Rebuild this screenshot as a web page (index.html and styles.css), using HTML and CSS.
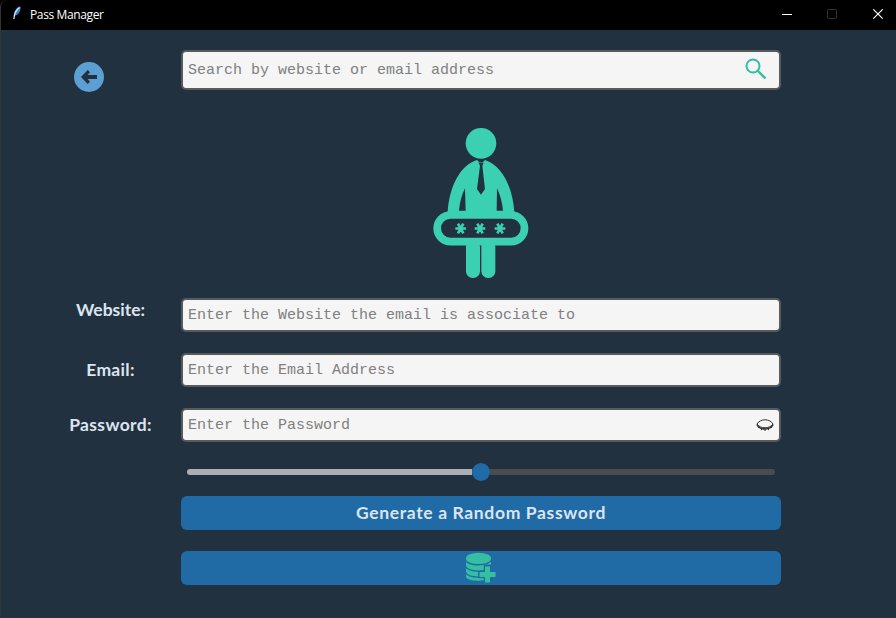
FILE: index.html
```html
<!DOCTYPE html>
<html lang="en">
<head>
<meta charset="utf-8">
<title>Pass Manager</title>
<link rel="stylesheet" href="styles.css">
</head>
<body>
<div class="window">
  <header class="titlebar">
    <svg class="feather" width="9" height="14" viewBox="0 0 9 14"><path d="M1 11C.5 6 3 1 7.500.6 8 4 6 9 2.500 9.500" fill="#3e83cd"/><path d="M1 13C1 8 3 4 6.500 1.500" fill="none" stroke="#d6eaff" stroke-width="1.300"/></svg>
    <span class="title">Pass Manager</span>
    <svg class="controls" width="102" height="12" viewBox="0 0 102 12" fill="none"><path d="M0 5.500H10" stroke="#fff"/><rect x="45.500" y=".5" width="9" height="9" rx="1" stroke="#333"/><path d="M91.300.3l9.400 9.400M100.700.3l-9.400 9.400" stroke="#fff" stroke-width="1.100"/></svg>
  </header>
  <main class="form">
    <button class="back" aria-label="Back"><svg width="30" height="30" viewBox="0 0 30 30"><circle cx="15" cy="15" r="15" fill="#5b9fd3"/><path d="M7 15l6.700-7 2.300 2.300-2.400 2.700H23v4h-9.400l2.400 2.700-2.300 2.300z" fill="#22313f"/></svg></button>
    <div class="field search"><span class="hint">Search by website or email address</span><svg width="22" height="22" viewBox="0 0 22 22" fill="none" stroke="#30bfa3"><circle cx="8" cy="8" r="6.500" stroke-width="2"/><path d="M12.500 12.500l8 8" stroke-width="2.400"/></svg></div>

    <svg class="figure" width="112" height="165" viewBox="0 0 336 495">
      <g fill="#3bd0b2">
        <circle cx="168" cy="70" r="46"/>
        <path d="M68 276C73 200 105 136 156 120Q162 128 168 128Q174 128 180 120C230 136 263 200 268 276Z"/>
        <rect x="123" y="360" width="42" height="114" rx="20"/>
        <rect x="169" y="360" width="42" height="114" rx="20"/>
      </g>
      <path fill="#22313f" d="M160 127Q168 132 176 127L172 137L180 207L168 224L156 207L165 137ZM120 205C110 225 104 248 102 272H122ZM216 205C226 225 232 248 234 272H215Z"/>
      <rect x="36.500" y="285" width="262" height="80" rx="40" fill="#22313f" stroke="#3bd0b2" stroke-width="23"/>
      <path d="M91 325.500h32M99 311l16 29M115 311l-16 29M149 325.500h32M157 311l16 29M173 311l-16 29M209 325.500h32M217 311l16 29M233 311l-16 29" fill="none" stroke="#3bd0b2" stroke-width="8"/>
    </svg>

    <span class="label website">Website:</span>
    <div class="field"><span class="hint">Enter the Website the email is associate to</span></div>
    <span class="label email">Email:</span>
    <div class="field"><span class="hint">Enter the Email Address</span></div>
    <span class="label password">Password:</span>
    <div class="field"><span class="hint">Enter the Password</span><svg class="eye" width="18" height="12" viewBox="0 0 18 12" fill="none" stroke="#303030"><path d="M1 5C4-.6 14-.6 17 5C14 10 4 10 1 5Z"/><path d="M.8 5.500C4 11.500 14 11.500 17.200 5.500" stroke-width="1.500"/><path d="M3 8l-1 1M6 9l-.6 2.200M9 10v2M12 9l.6 2.200M15 8l1 1"/></svg></div>

    <div class="slider"><span class="filled"></span><span class="thumb"></span><span class="rest"></span></div>
    <button class="action">Generate a Random Password</button>
    <button class="action save" aria-label="Save"><svg width="31" height="31" viewBox="0 0 31 31"><path d="M1 6v18.500c0 2.500 5 4.200 12.500 4.200S26 26.500 26 24.500V6z" fill="#35bea0"/><path d="M0 7.500c3 7 23 7 27 0M0 13.500c3 7.500 23 7.500 27 0M0 19.500c3 7.500 23 7.500 27 0" fill="none" stroke="#206ba6" stroke-width="1.400"/><ellipse cx="13.500" cy="6" rx="12.500" ry="5.300" fill="#35bea0"/><path d="M22.500 12.500v18.500M13 22.500h18" stroke="#206ba6" stroke-width="7.500"/><path d="M22.500 14.500v16M14.500 22.500h16" stroke="#35bea0" stroke-width="5"/></svg></button>
  </main>
</div>
</body>
</html>
```

FILE: styles.css
```css
* { box-sizing: border-box; }
body { margin: 0; background: #000; }
button { border: 0; padding: 0; font: inherit; }
svg { display: block; flex: none; }
.window {
  height: 618px;
  border-left: 1px solid #343434;
  border-top-left-radius: 7px;
  background: #22313f;
  overflow: hidden;
}
.titlebar {
  display: flex;
  height: 30px;
  padding: 0 12px;
  background: #000;
  color: #fff;
}
.feather { margin-top: 6px; }
.title {
  margin-left: 8px;
  font: 12px/30px "Open Sans", sans-serif;
  letter-spacing: -.38px;
}
.controls { margin: 9px 0 0 auto; }
.form {
  display: grid;
  grid-template-columns: 140px 600px;
  grid-template-rows: 40px 166px 34px 34px 34px 18px 34px 34px;
  row-gap: 21px;
  padding: 20px 0 0 40px;
}
.back {
  width: 30px;
  height: 30px;
  margin: 12px 0 0 33px;
  background: transparent;
}
.field {
  display: flex;
  align-items: center;
  justify-content: space-between;
  border: 2px solid #565b5e;
  border-radius: 5px;
  background: #f5f5f5;
  padding: 0 5px;
}
.search { padding-right: 12px; }
.search svg { margin-top: -2px; }
.hint {
  margin-top: 2px;
  font: 15px/20px "Courier New", "Liberation Mono", monospace;
  color: #808080;
}
.figure { grid-column: 2; margin: 9px 0 0 244px; }
.label, .action {
  font: 700 17.5px/22px Lato, sans-serif;
  color: #dce4ee;
}
.label { justify-self: center; align-self: center; }
.website { margin: -10px 1px 0 0; letter-spacing: 0; }
.email { letter-spacing: .3px; margin-right: 1px; }
.password { letter-spacing: .35px; margin-right: 1px; }
.slider {
  grid-column: 2;
  display: flex;
  align-items: center;
  padding: 0 6px;
}
.filled, .rest { flex: 1; height: 6px; }
.filled { background: #aab0b5; border-radius: 3px 0 0 3px; }
.rest { background: #4a4d50; border-radius: 0 3px 3px 0; }
.thumb { width: 18px; height: 18px; border-radius: 50%; background: #206ba6; }
.action {
  grid-column: 2;
  height: 34px;
  border-radius: 6px;
  background: #206ba6;
  letter-spacing: .65px;
  margin-top: -6px;
}
.save { display: grid; place-items: center; padding: 0 2px 1px 0; }
```
